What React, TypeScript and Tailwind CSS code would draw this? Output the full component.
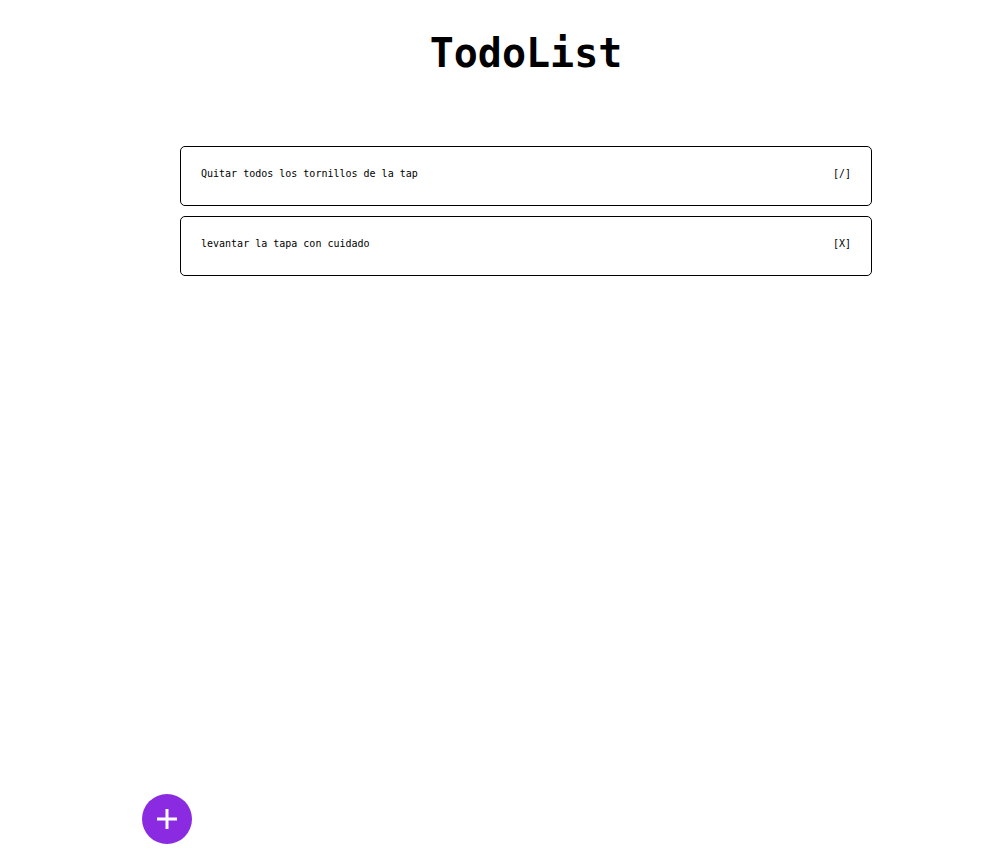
import React, { useState } from 'react';

type Todo = {
    id: number;
    text: string;
    done: boolean;
};

const initialTodos: Todo[] = [
    { id: 1, text: 'Quitar todos los tornillos de la tap', done: true },
    { id: 2, text: 'levantar la tapa con cuidado', done: false },
];

const App = () => {
    const [todos, setTodos] = useState<Todo[]>(initialTodos);

    const toggle = (id: number) => {
        setTodos((prev) => prev.map((t) => (t.id === id ? { ...t, done: !t.done } : t)));
    };

    return (
        <div className="min-h-screen bg-white text-black font-['DejaVu_Sans_Mono',monospace]">
            <div className="ml-[180px] w-[692px]">
                <h1 className="pt-[30px] text-center text-[40px] leading-[46px] font-bold">TodoList</h1>

                <ul className="mt-[70px] flex flex-col gap-[10px]">
                    {todos.map((todo) => (
                        <li
                            key={todo.id}
                            className="h-[60px] border border-black rounded-[5px] px-[20px] pt-[21px] flex items-start justify-between text-[10px] leading-[12px]"
                        >
                            <span>{todo.text}</span>
                            <button
                                type="button"
                                onClick={() => toggle(todo.id)}
                                className="cursor-pointer leading-[12px]"
                            >
                                {todo.done ? '[/]' : '[X]'}
                            </button>
                        </li>
                    ))}
                </ul>
            </div>

            <button
                type="button"
                className="fixed bottom-[15px] left-[142px] w-[50px] h-[50px] rounded-full bg-[#8a2be2] flex items-center justify-center"
            >
                <svg width="22" height="22" viewBox="0 0 22 22">
                    <path d="M11 1v20M1 11h20" stroke="white" strokeWidth="3" />
                </svg>
            </button>
        </div>
    );
};

export default App;
